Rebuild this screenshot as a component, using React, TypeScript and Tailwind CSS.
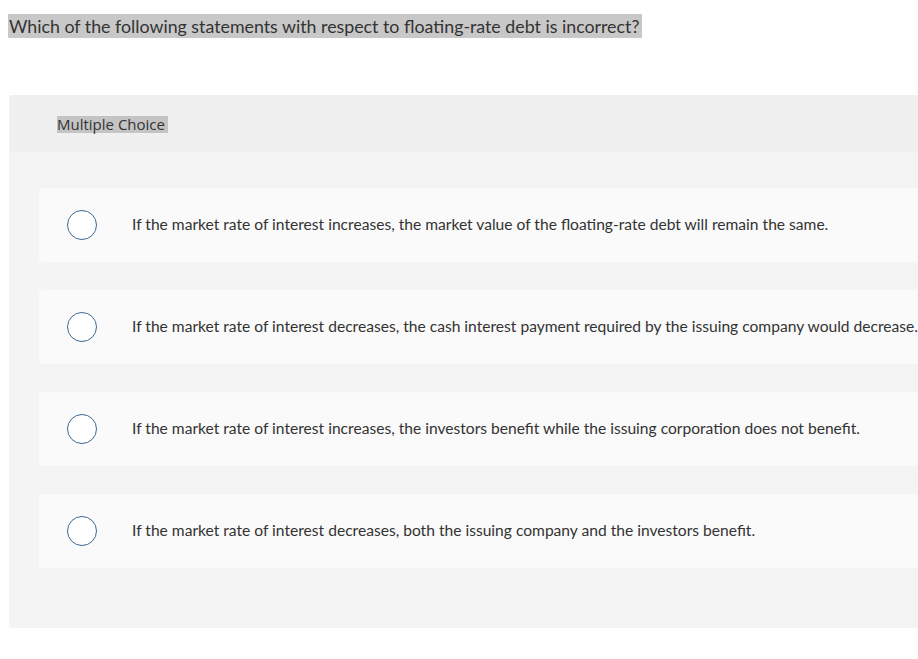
import React from "react";

const options = [
  "If the market rate of interest increases, the market value of the floating-rate debt will remain the same.",
  "If the market rate of interest decreases, the cash interest payment required by the issuing company would decrease.",
  "If the market rate of interest increases, the investors benefit while the issuing corporation does not benefit.",
  "If the market rate of interest decreases, both the issuing company and the investors benefit.",
];

export default function App() {
  return (
    <div className="w-[918px] h-[659px] overflow-hidden bg-white" style={{ fontFamily: "Lato, 'Open Sans', sans-serif" }}>
      <div className="pt-[14px] pl-[8px]">
        <div className="w-fit bg-[#c8c8c8] h-[24px] leading-[24px] pl-[1px] pr-[3px] text-[17.8px] text-[#333]">
          Which of the following statements with respect to floating-rate debt is incorrect?
        </div>
      </div>
      <div className="mt-[57px] ml-[9px] w-[1000px] h-[533px] rounded-[3px] bg-[#f4f4f4] flex flex-col">
        <div className="h-[57px] bg-[#f0f0f0] rounded-t-[3px] pl-[48px] pt-[21px]">
          <div className="w-fit bg-[#c4c4c4] h-[17px] leading-[17px] pr-[3px] text-[15px] text-[#333]" style={{ fontFamily: "'Open Sans', sans-serif" }}>
            Multiple Choice
          </div>
        </div>
        <div className="pl-[30px] pt-[36px] flex flex-col gap-[28px]">
          {options.map((o, i) => (
            <div key={i} className="h-[74px] bg-[#fafafa] rounded-[3px] flex items-center">
              <div className="ml-[28px] w-[30px] h-[30px] rounded-full border-[1.5px] border-[#3d6893] bg-white shrink-0" />
              <div className="ml-[35px] text-[15.6px] text-[#333] whitespace-nowrap">{o}</div>
            </div>
          ))}
        </div>
      </div>
    </div>
  );
}
